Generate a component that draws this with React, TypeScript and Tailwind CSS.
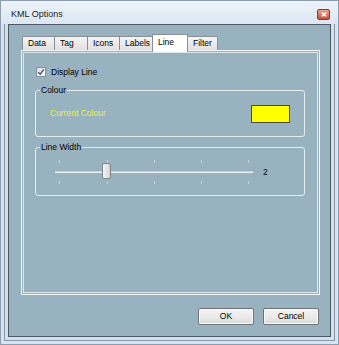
import React from "react";

const ticks = [4, 52, 99, 146, 193];

function Tab({ label, w, selected, first }: { label: string; w: string; selected?: boolean; first?: boolean }) {
  if (selected) {
    return (
      <div
        className={`relative z-10 ${w} h-[18px] -mb-[2px] -ml-px bg-white border-l border-t border-r border-[#8a8e95] flex items-center pl-[5px] pb-[3px] text-[8.5px] leading-none`}
      >
        {label}
      </div>
    );
  }
  return (
    <div
      className={`${w} h-[14px] ${first ? "" : "-ml-px"} bg-gradient-to-b from-[#f4f4f4] to-[#e1e1e1] border-l border-t border-r border-[#8a8e95] flex items-center pl-[5px] text-[8.5px] leading-none`}
    >
      {label}
    </div>
  );
}

function Button({ label }: { label: string }) {
  return (
    <div className="w-[56px] h-[17px] rounded-[2px] border border-[#6f7276] bg-gradient-to-b from-[#f3f3f3] via-[#ebebeb] to-[#d9d9d9] flex items-center justify-center text-[8.5px] leading-none shadow-[inset_0_0_0_1px_#fbfbfb]">
      {label}
    </div>
  );
}

export default function App() {
  return (
    <div className="w-[339px] h-[345px] bg-[#d7e3f0] border border-[#8d9cad] flex flex-col font-['Liberation_Sans',Arial,sans-serif] text-black overflow-hidden">
      {/* title bar */}
      <div className="h-[23px] flex items-center justify-between pl-[10px] pr-[8px] bg-gradient-to-b from-[#edf3fa] to-[#dce7f3]">
        <span className="text-[9px] leading-none mt-[4px] text-[#1b1b1b]">KML Options</span>
        <div className="w-[13px] h-[11px] mt-[4px] rounded-[2px] border border-[#8a3c2c] bg-gradient-to-b from-[#eaa48e] to-[#c4513a] flex items-center justify-center">
          <svg width="6" height="5" viewBox="0 0 6 5">
            <path d="M0.8 0.6 L5.2 4.4 M5.2 0.6 L0.8 4.4" stroke="#ffffff" strokeWidth="1.4" />
          </svg>
        </div>
      </div>
      <div className="flex-1 px-[3px] pb-[3px] flex">
        <div className="flex-1 border-x border-b border-[#8797a8] px-[3px] pb-[3px] flex bg-[#d3e0ee]">
          <div className="flex-1 border border-[#4d5864] bg-[#99b2c0] flex flex-col pt-[9px]">
            {/* tabs */}
            <div className="flex items-end h-[16px] pl-[13px]">
              <Tab label="Data" w="w-[33px]" first />
              <Tab label="Tag" w="w-[34px]" />
              <Tab label="Icons" w="w-[33px]" />
              <Tab label="Labels" w="w-[34px]" />
              <Tab label="Line" w="w-[36px]" selected />
              <Tab label="Filter" w="w-[31px]" />
            </div>
            {/* panel */}
            <div className="ml-[12px] w-[299px] h-[245px] border border-[#f3f6f8] p-[1px]">
              <div className="h-full border border-[#dde6eb] pt-[14px] pl-[11px] flex flex-col">
                {/* checkbox */}
                <div className="flex items-center h-[10px] ml-[1px]">
                  <div className="w-[10px] h-[10px] border border-[#8e8f90] bg-gradient-to-br from-[#dedede] to-[#fafafa] flex items-center justify-center">
                    <svg width="8" height="8" viewBox="0 0 8 8">
                      <path d="M1.2 4.2 L3.2 6.2 L6.8 1.4" stroke="#3d4f86" strokeWidth="1.3" fill="none" />
                    </svg>
                  </div>
                  <span className="ml-[5px] text-[8.5px] leading-none">Display Line</span>
                </div>
                {/* Colour group */}
                <div className="relative mt-[13px] w-[270px] h-[47px] border border-[#e6edf1] rounded-[3px] flex items-center justify-between pl-[14px] pr-[14px]">
                  <span className="absolute -top-[6px] left-[4px] px-[1px] bg-[#99b2c0] text-[8.5px] leading-[11px]">Colour</span>
                  <span className="text-[8.5px] leading-none text-[#e8f23c]">Current Colour</span>
                  <div className="w-[39px] h-[18px] border border-[#4b4b4b] bg-[#ffff00]" />
                </div>
                {/* Line width group */}
                <div className="relative mt-[10px] w-[270px] h-[49px] border border-[#e6edf1] rounded-[3px] pt-[10px] pl-[19px] flex items-start">
                  <span className="absolute -top-[6px] left-[4px] px-[1px] bg-[#99b2c0] text-[8.5px] leading-[11px]">Line Width</span>
                  <div className="relative w-[200px] h-[28px]">
                    {ticks.map((t) => (
                      <React.Fragment key={t}>
                        <div className="absolute top-[2px] w-px h-[3px] bg-[#c3d2db]" style={{ left: t }} />
                        <div className="absolute top-[23px] w-px h-[3px] bg-[#c3d2db]" style={{ left: t }} />
                      </React.Fragment>
                    ))}
                    <div className="absolute top-[13px] left-0 w-[198px] h-[2px] bg-[#eef2f4] border-t border-[#c6cfd5]" />
                    <div className="absolute top-[5px] left-[47px] w-[9px] h-[16px] rounded-[2px] border border-[#7f8488] bg-gradient-to-r from-[#f7f7f7] to-[#d3d3d3]" />
                  </div>
                  <span className="ml-[8px] mt-[10px] text-[8.5px] leading-none">2</span>
                </div>
              </div>
            </div>
            {/* buttons */}
            <div className="mt-[13px] flex justify-end gap-[9px] pr-[11px]">
              <Button label="OK" />
              <Button label="Cancel" />
            </div>
          </div>
        </div>
      </div>
    </div>
  );
}
